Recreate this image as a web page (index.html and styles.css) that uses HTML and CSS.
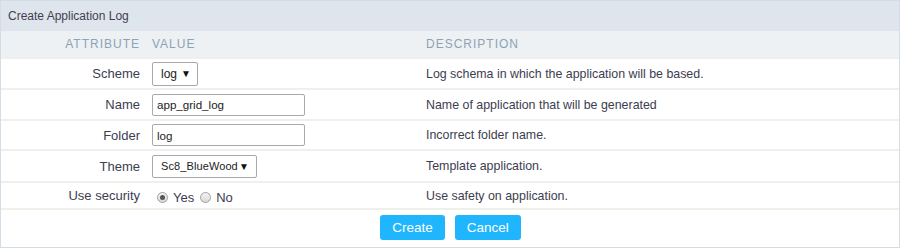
FILE: index.html
```html
<!DOCTYPE html>
<html lang="en">
<head>
  <meta charset="UTF-8" />
  <title>Create Application Log</title>
  <link rel="stylesheet" href="styles.css">
</head>
<body>
  <div class="panel">
    <div class="panel-title">Create Application Log</div>
    <div class="row head">
      <div class="label">Attribute</div>
      <div class="value">Value</div>
      <div class="desc">Description</div>
    </div>
    <div class="row r-scheme">
      <div class="label">Scheme</div>
      <div class="value"><div class="select small">log <span class="caret">▼</span></div></div>
      <div class="desc">Log schema in which the application will be based.</div>
    </div>
    <div class="row r-name">
      <div class="label">Name</div>
      <div class="value"><input class="field" type="text" value="app_grid_log" /></div>
      <div class="desc">Name of application that will be generated</div>
    </div>
    <div class="row r-folder">
      <div class="label">Folder</div>
      <div class="value"><input class="field" type="text" value="log" /></div>
      <div class="desc">Incorrect folder name.</div>
    </div>
    <div class="row r-theme">
      <div class="label">Theme</div>
      <div class="value"><div class="select wide"><span class="sel-text">Sc8_BlueWood</span> <span class="caret">▼</span></div></div>
      <div class="desc">Template application.</div>
    </div>
    <div class="row r-security">
      <div class="label">Use security</div>
      <div class="value radios">
        <span class="radio checked"></span><span class="opt">Yes</span>
        <span class="radio"></span><span class="opt">No</span>
      </div>
      <div class="desc">Use safety on application.</div>
    </div>
    <div class="actions">
      <button class="btn">Create</button>
      <button class="btn">Cancel</button>
    </div>
  </div>
</body>
</html>
```

FILE: styles.css
```css
body {
  margin: 0;
  font-family: 'Liberation Sans', Arial, sans-serif;
  background: #ffffff;
}
.panel {
  width: 898px;
  height: 246px;
  border: 1px solid #d3dde5;
  display: flex;
  flex-direction: column;
}
.panel-title {
  height: 30px;
  line-height: 30px;
  padding-left: 7px;
  background: #dfe5ec;
  color: #3f3f50;
  font-size: 12px;
}
.row {
  display: grid;
  grid-template-columns: 151px 274px 1fr;
  align-items: center;
  border-bottom: 2px solid #f0f0ea;
  color: #3d3d4f;
}
.row .label {
  text-align: right;
  padding-right: 12px;
  font-size: 13px;
}
.row .desc {
  font-size: 12.4px;
}
.head {
  height: 26px;
  background: #edf1f4;
  color: #8da2b4;
  text-transform: uppercase;
  letter-spacing: 1px;
}
.head .label, .head .value, .head .desc {
  font-size: 12px;
}
.r-scheme { height: 29px; }
.r-name { height: 29px; }
.r-folder { height: 28px; }
.r-theme { height: 30px; }
.r-security { height: 25px; }
.select {
  box-sizing: border-box;
  height: 24px;
  border: 1px solid #a9a9a9;
  border-radius: 2px;
  display: flex;
  align-items: center;
  justify-content: space-between;
  padding: 0 6px 0 8px;
  font-size: 12px;
  color: #222;
  background: #fff;
}
.select.small { width: 46px; }
.select.wide {
  width: 105px;
  height: 23px;
  padding-right: 7px;
}
.sel-text {
  font-size: 11px;
  letter-spacing: 0.1px;
}
.caret {
  font-size: 10px;
  color: #111;
}
.field {
  box-sizing: border-box;
  width: 153px;
  height: 22px;
  margin: 0;
  border: 1px solid #a9a9a9;
  border-radius: 2px;
  padding: 0 4px;
  font-family: 'Liberation Sans', Arial, sans-serif;
  font-size: 11.6px;
  color: #222;
}
.radios {
  display: flex;
  align-items: center;
  padding-left: 5px;
  padding-top: 3px;
}
.radio {
  box-sizing: border-box;
  width: 11px;
  height: 11px;
  border-radius: 50%;
  border: 1px solid #a0a0a0;
  background: linear-gradient(#f4f4f4, #d8d8d8);
  margin-right: 5px;
  position: relative;
}
.radio.checked::after {
  content: '';
  position: absolute;
  left: 2px;
  top: 2px;
  width: 5px;
  height: 5px;
  border-radius: 50%;
  background: #555;
}
.opt {
  font-size: 13px;
  margin-right: 6px;
}
.actions {
  flex: 1;
  display: flex;
  justify-content: center;
  align-items: center;
  gap: 10px;
  padding-bottom: 2px;
  padding-left: 1px;
}
.btn {
  height: 25px;
  border: none;
  border-radius: 3px;
  background: #20b6fd;
  color: #ffffff;
  font-family: 'Liberation Sans', Arial, sans-serif;
  font-size: 13.5px;
  padding: 0 12px;
  cursor: pointer;
}
```
